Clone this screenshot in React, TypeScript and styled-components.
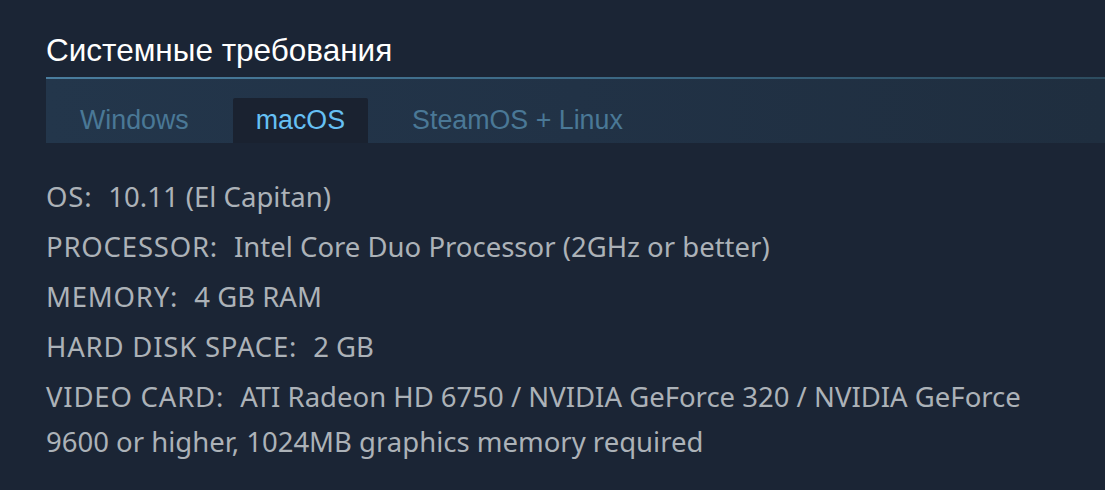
import styled, { createGlobalStyle } from 'styled-components';
import { useState } from 'react';

interface Requirement {
  label: string;
  value: string;
}

interface ITab {
  active: boolean;
}

const platforms = ['Windows', 'macOS', 'SteamOS + Linux'];

const macRequirements: Requirement[] = [
  { label: 'OS:', value: '10.11 (El Capitan)' },
  { label: 'PROCESSOR:', value: 'Intel Core Duo Processor (2GHz or better)' },
  { label: 'MEMORY:', value: '4 GB RAM' },
  { label: 'HARD DISK SPACE:', value: '2 GB' },
  {
    label: 'VIDEO CARD:',
    value:
      'ATI Radeon HD 6750 / NVIDIA GeForce 320 / NVIDIA GeForce 9600 or higher, 1024MB graphics memory required',
  },
];

const GlobalStyle = createGlobalStyle`
  html, body {
    margin: 0;
    padding: 0;
    background-color: #1b2535;
  }
`;

const App = () => {
  const [platform, setPlatform] = useState('macOS');

  return (
    <>
      <GlobalStyle />
      <Section>
        <Title>Системные требования</Title>
        <TabBar>
          {platforms.map((name) => (
            <Tab
              key={name}
              active={platform === name}
              onClick={() => setPlatform(name)}
            >
              {name}
            </Tab>
          ))}
        </TabBar>
        <List>
          {macRequirements.map((item) => (
            <Item key={item.label}>
              <Label>{item.label}</Label>
              {item.value}
            </Item>
          ))}
        </List>
      </Section>
    </>
  );
};

const Section = styled.section`
  padding: 32px 0 0 46px;
  min-height: 458px;
  background-color: #1b2535;
`;

const Title = styled.h2`
  margin: 0;
  padding-bottom: 9px;
  font-family: 'Liberation Sans', Arial, sans-serif;
  font-size: 31.5px;
  font-weight: 400;
  line-height: 36px;
  color: #ffffff;
  border-bottom: 2px solid transparent;
  border-image: linear-gradient(90deg, #4a7d9e 0%, #3a6580 60%, #2d4c5f 100%) 1;
`;

const TabBar = styled.div`
  display: flex;
  align-items: flex-end;
  gap: 21px;
  height: 64px;
  padding-left: 11px;
  box-sizing: border-box;
  background: linear-gradient(90deg, #23364b 0%, #213246 50%, #1f2e3f 100%);
`;

const Tab = styled.div.withConfig({
  shouldForwardProp: (prop) => prop !== 'active',
})<ITab>`
  height: 45px;
  padding: 0 23px;
  font-family: 'Liberation Sans', Arial, sans-serif;
  font-size: 26.8px;
  line-height: 45px;
  color: ${({ active }) => (active ? '#66c0f4' : '#4a7896')};
  background-color: ${({ active }) => (active ? '#1a2230' : 'transparent')};
  border-radius: 2px 2px 0 0;
  cursor: pointer;
  white-space: nowrap;
`;

const List = styled.ul`
  margin: 0;
  padding: 31px 55px 0 0;
  list-style: none;
`;

const Item = styled.li`
  margin-bottom: 5px;
  font-family: 'Noto Sans', 'Open Sans', sans-serif;
  font-size: 27.5px;
  line-height: 45px;
  color: #acb2b8;
`;

const Label = styled.span`
  margin-right: 16px;
  letter-spacing: 0.8px;
`;

export default App;
